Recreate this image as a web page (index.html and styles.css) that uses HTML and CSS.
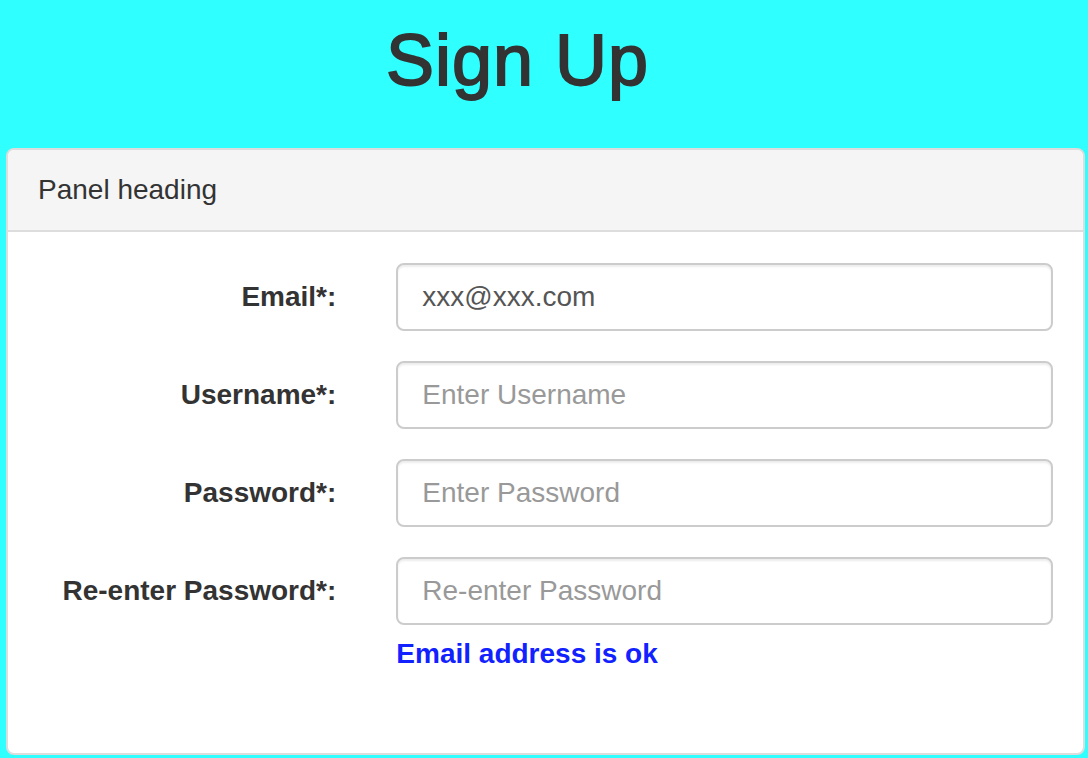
FILE: index.html
```html
<!DOCTYPE html>
<html lang="en">
<head>
<meta charset="utf-8">
<title>Sign Up</title>
<link rel="stylesheet" href="styles.css">
</head>
<body>
<div class="page">
  <header class="header">
    <h1 class="title">Sign Up</h1>
  </header>
  <section class="panel">
    <div class="panel-heading">Panel heading</div>
    <div class="panel-body">
      <form class="form">
        <div class="form-row">
          <label class="form-label" for="email">Email*:</label>
          <div class="form-field">
            <input class="form-input" id="email" type="text" value="xxx@xxx.com">
          </div>
        </div>
        <div class="form-row">
          <label class="form-label" for="username">Username*:</label>
          <div class="form-field">
            <input class="form-input" id="username" type="text" placeholder="Enter Username">
          </div>
        </div>
        <div class="form-row">
          <label class="form-label" for="password">Password*:</label>
          <div class="form-field">
            <input class="form-input" id="password" type="password" placeholder="Enter Password">
          </div>
        </div>
        <div class="form-row">
          <label class="form-label" for="password2">Re-enter Password*:</label>
          <div class="form-field">
            <input class="form-input" id="password2" type="password" placeholder="Re-enter Password">
            <div class="form-message">Email address is ok</div>
          </div>
        </div>
      </form>
    </div>
  </section>
</div>
</body>
</html>
```
FILE: styles.css
```css
html, body {
  margin: 0;
  padding: 0;
}

body {
  background: #30ffff;
  font-family: "Liberation Sans", Arial, Helvetica, sans-serif;
  color: #333333;
}

.page {
  display: flex;
  flex-direction: column;
  min-height: 758px;
  box-sizing: border-box;
  padding: 0 3px 3px 6px;
}

.header {
  padding: 21px 56px 0 0;
  text-align: center;
}

.title {
  margin: 0;
  font-size: 72px;
  line-height: 79px;
  font-weight: 500;
  color: #333333;
  -webkit-text-stroke: 1.8px #333333;
  letter-spacing: 1px;
}

.panel {
  margin-top: 48px;
  flex: 1;
  display: flex;
  flex-direction: column;
  background: #ffffff;
  border: 2px solid #dddddd;
  border-radius: 8px;
  overflow: hidden;
}

.panel-heading {
  background: #f5f5f5;
  border-bottom: 2px solid #dddddd;
  padding: 20px 30px;
  font-size: 28px;
  line-height: 40px;
  color: #333333;
}

.panel-body {
  flex: 1;
  padding: 31px 0 30px;
}

.form {
  display: flex;
  flex-direction: column;
  gap: 30px;
}

.form-row {
  display: grid;
  grid-template-columns: 33.3333% 66.6667%;
}

.form-label {
  padding: 14px 30px 0;
  text-align: right;
  font-weight: bold;
  font-size: 28px;
  line-height: 40px;
  color: #333333;
}

.form-field {
  padding: 0 30px;
}

.form-input {
  display: block;
  box-sizing: border-box;
  width: 100%;
  height: 68px;
  margin: 0;
  padding: 12px 24px;
  font-family: "Liberation Sans", Arial, Helvetica, sans-serif;
  font-size: 28px;
  line-height: 40px;
  color: #555555;
  background: #ffffff;
  border: 2px solid #cccccc;
  border-radius: 8px;
  box-shadow: inset 0 2px 2px rgba(0, 0, 0, 0.075);
  outline: none;
}

.form-input::placeholder {
  color: #999999;
  opacity: 1;
}

.form-message {
  margin-top: 9px;
  font-size: 28px;
  line-height: 40px;
  font-weight: bold;
  color: #1122ff;
}
```
